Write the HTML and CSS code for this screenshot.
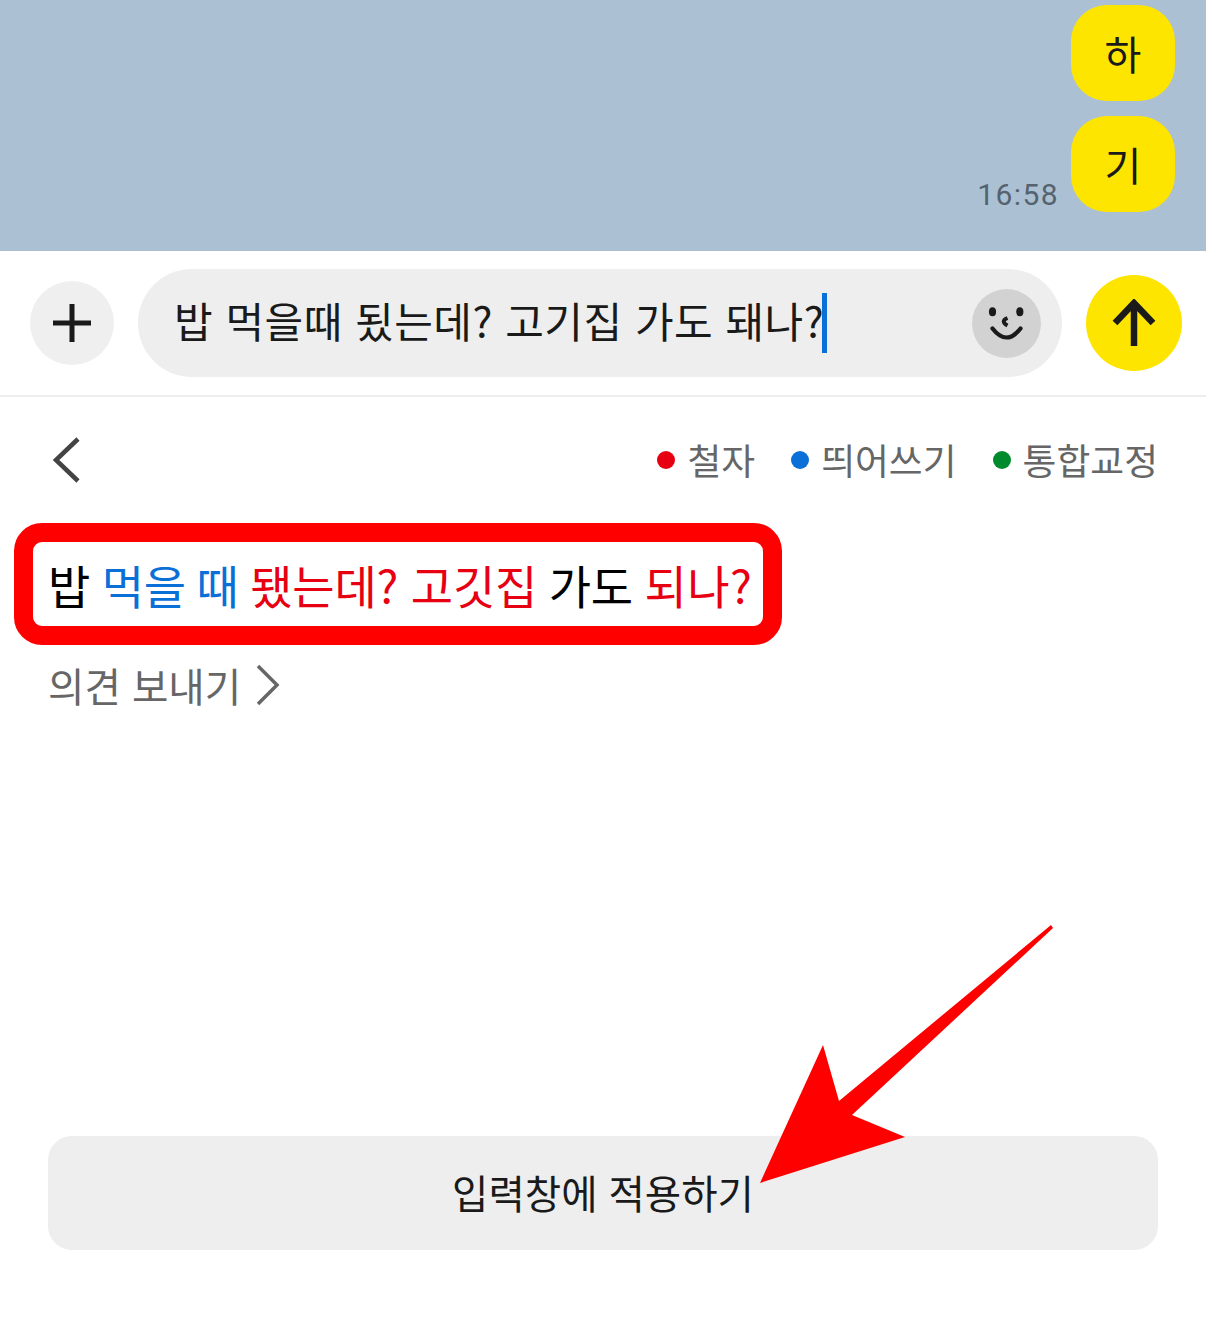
FILE: index.html
```html
<!DOCTYPE html>
<html lang="ko">
<head>
  <meta charset="UTF-8" />
  <title>맞춤법 검사</title>
  <link rel="stylesheet" href="styles.css">
</head>
<body>
  <div class="screen">
    <div class="chat">
      <div class="msg-row">
        <div class="bubble">하</div>
      </div>
      <div class="msg-row">
        <span class="time">16:58</span>
        <div class="bubble">기</div>
      </div>
    </div>

    <div class="input-bar">
      <button class="plus-btn">
        <svg width="40" height="40" viewBox="0 0 40 40"><path d="M20 1V39M1 20H39" stroke="#1a1a1a" stroke-width="5" fill="none"/></svg>
      </button>
      <div class="input-pill">
        <div class="input-text"><span class="typed">밥 먹을때 됬는데? 고기집 가도 돼나?</span><span class="caret"></span></div>
        <div class="emoji-btn">
          <svg width="40" height="40" viewBox="0 0 40 40">
            <ellipse cx="5.500" cy="8.800" rx="3.600" ry="4.500" fill="#1a1a1a"/>
            <ellipse cx="32.800" cy="8.800" rx="3.600" ry="4.500" fill="#1a1a1a"/>
            <path d="M20.500 15C15.500 17 15.500 20 20.500 22.500" stroke="#1a1a1a" stroke-width="4" fill="none"/>
            <path d="M5.500 25.500Q19.500 43.500 33.500 25.500" stroke="#1a1a1a" stroke-width="4.200" stroke-linecap="round" fill="none"/>
          </svg>
        </div>
      </div>
      <button class="send-btn">
        <svg width="44" height="48" viewBox="0 0 44 48"><path d="M22 47V4M3 24L22 4L41 24" stroke="#1a1a1a" stroke-width="6.500" fill="none"/></svg>
      </button>
    </div>

    <div class="panel">
      <div class="panel-head">
        <svg class="back" width="30" height="48" viewBox="0 0 30 48"><path d="M27 3L5 24L27 45" stroke="#444" stroke-width="4.500" fill="none"/></svg>
        <div class="legend">
          <span class="legend-item"><i class="dot dot-red"></i>철자</span>
          <span class="legend-item"><i class="dot dot-blue"></i>띄어쓰기</span>
          <span class="legend-item"><i class="dot dot-green"></i>통합교정</span>
        </div>
      </div>

      <div class="result-box">밥 <span class="blue">먹을 때</span> <span class="red">됐는데? 고깃집</span> 가도 <span class="red last">되나?</span></div>

      <div class="feedback">의견 보내기
        <svg width="24" height="42" viewBox="0 0 24 42"><path d="M2 2L21 21L2 40" stroke="#666" stroke-width="3.500" fill="none"/></svg>
      </div>

      <button class="apply-btn">입력창에 적용하기</button>
    </div>

    <svg class="callout" width="1206" height="1322" viewBox="0 0 1206 1322">
      <polygon points="760,1183 823,1045 839,1101 1051,925 1053,928 852,1115 905,1137" fill="#ff0000"/>
    </svg>
  </div>
</body>
</html>
```

FILE: styles.css
```css
* {
  margin: 0;
  padding: 0;
  box-sizing: border-box;
  font-family: "Noto Sans CJK KR", "Noto Sans", sans-serif;
}

body, html {
  height: 100%;
  background: #fff;
}

.screen {
  position: relative;
  width: 1206px;
  height: 1322px;
  overflow: hidden;
}

.chat {
  height: 251px;
  background-color: #abc1d3;
  padding: 5px 31px 0 0;
  display: flex;
  flex-direction: column;
  gap: 15px;
}

.msg-row {
  display: flex;
  justify-content: flex-end;
  align-items: flex-end;
  gap: 12px;
}

.bubble {
  width: 104px;
  height: 96px;
  background-color: #fee500;
  border-radius: 36px;
  display: flex;
  align-items: center;
  justify-content: center;
  font-size: 40px;
  color: #1a1a1a;
}

.time {
  font-size: 30px;
  line-height: 34px;
  color: #556270;
  font-family: "Roboto", sans-serif;
  letter-spacing: 1.400px;
}

.input-bar {
  height: 146px;
  border-bottom: 2px solid #eeeeee;
  display: flex;
  align-items: center;
  padding: 0 24px 0 30px;
}

.plus-btn {
  width: 84px;
  height: 84px;
  border: none;
  border-radius: 50%;
  background-color: #efefef;
  display: flex;
  align-items: center;
  justify-content: center;
}

.input-pill {
  width: 924px;
  height: 108px;
  margin: 0 24px;
  padding: 0 21px 0 36px;
  background-color: #eeeeee;
  border-radius: 54px;
  display: flex;
  align-items: center;
  justify-content: space-between;
}

.input-text {
  font-size: 42px;
  letter-spacing: 0.500px;
  color: #1a1a1a;
  display: flex;
  align-items: center;
  white-space: nowrap;
}

.typed {
  margin-bottom: 8px;
}

.caret {
  width: 5px;
  height: 60px;
  margin-left: -2px;
  background-color: #0b6fd8;
}

.emoji-btn {
  width: 69px;
  height: 69px;
  border-radius: 50%;
  background-color: #d2d2d2;
  display: flex;
  align-items: center;
  justify-content: center;
}

.send-btn {
  width: 96px;
  height: 96px;
  border: none;
  border-radius: 50%;
  background-color: #fee500;
  display: flex;
  align-items: center;
  justify-content: center;
}

.panel {
  padding: 0 48px;
}

.panel-head {
  height: 126px;
  display: flex;
  align-items: center;
  justify-content: space-between;
}

.back {
  margin-left: 3px;
}

.legend {
  display: flex;
  gap: 36px;
  margin-bottom: 2px;
}

.legend-item {
  display: flex;
  align-items: center;
  gap: 12px;
  font-size: 36.800px;
  color: #666;
}

.dot {
  width: 18px;
  height: 18px;
  border-radius: 50%;
  margin-top: 2px;
}

.dot-red { background-color: #e60012; }
.dot-blue { background-color: #0b6fd8; }
.dot-green { background-color: #008a2e; }

.result-box {
  width: 768px;
  height: 122px;
  margin-left: -34px;
  padding-left: 15px;
  border: 19px solid #ff0000;
  border-radius: 28px;
  display: flex;
  align-items: center;
  gap: 0.25em;
  font-size: 46px;
  letter-spacing: -0.200px;
  color: #000;
  white-space: nowrap;
}

.blue {
  color: #0b6fd8;
  word-spacing: -2px;
}

.red { color: #e60012; }

.last {
  letter-spacing: 0.500px;
}

.feedback {
  margin-top: 11px;
  display: flex;
  align-items: center;
  gap: 15px;
  font-size: 39.600px;
  color: #666;
}

.apply-btn {
  display: block;
  width: 1110px;
  height: 114px;
  margin-top: 423px;
  padding-bottom: 4px;
  border: none;
  border-radius: 24px;
  background-color: #eeeeee;
  font-size: 39.500px;
  color: #1a1a1a;
}

.callout {
  position: absolute;
  left: 0;
  top: 0;
  pointer-events: none;
}
```
